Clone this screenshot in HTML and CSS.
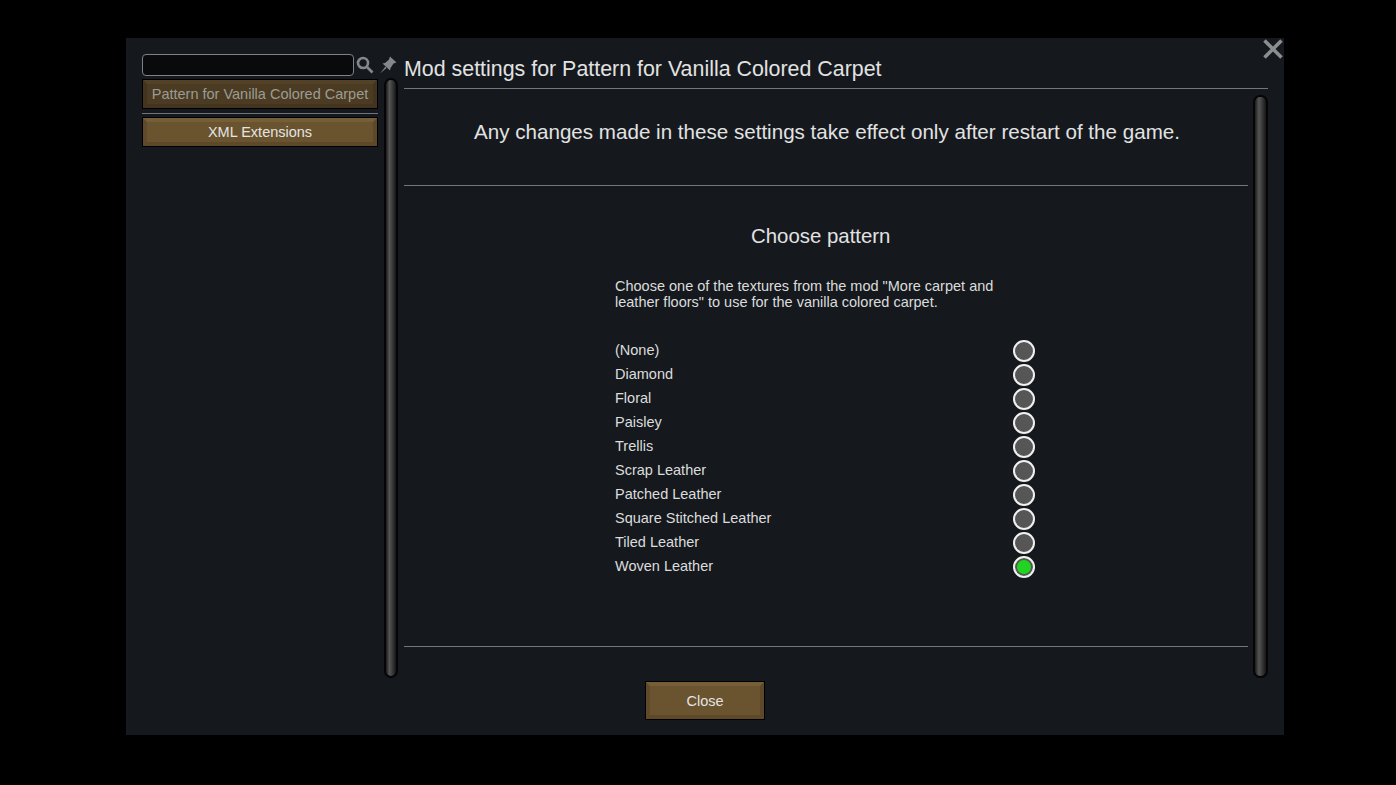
FILE: index.html
```html
<!DOCTYPE html>
<html lang="en">
<head>
<meta charset="utf-8">
<title>Mod settings</title>
<link rel="stylesheet" href="styles.css">
</head>
<body>
<div class="window">
  <svg class="close-x" viewBox="0 0 20 20" width="20" height="20"><path d="M1.5 1.5 18.5 18.5M18.5 1.5 1.5 18.5"/></svg>
  <div class="columns">
    <aside class="sidebar">
      <div class="search-row">
        <div class="search-box"></div>
        <svg class="icon-search" viewBox="0 0 18 18" width="18" height="18"><circle cx="7" cy="7" r="5"/><path d="M11 11 16.5 16.5"/></svg>
        <svg class="icon-pin" viewBox="0 0 18 18" width="18" height="18"><path d="M11 0.5 17.5 6.5 14.5 7.5 11.5 12 11 14.5 3.5 7.5 6 7 10 3.5Z"/><path d="M6.5 10.5 1 17.5 7.5 12Z"/></svg>
      </div>
      <div class="side-body">
        <div class="mod-list">
          <div class="btn mod-btn dim">Pattern for Vanilla Colored Carpet</div>
          <div class="mod-sep"></div>
          <div class="btn mod-btn">XML Extensions</div>
        </div>
        <div class="scrollbar"></div>
      </div>
    </aside>
    <main class="main">
      <h1 class="title">Mod settings for Pattern for Vanilla Colored Carpet</h1>
      <div class="main-body">
        <div class="content">
          <p class="notice">Any changes made in these settings take effect only after restart of the game.</p>
          <section class="pattern">
            <h2 class="pattern-title">Choose pattern</h2>
            <p class="desc">Choose one of the textures from the mod "More carpet and leather floors" to use for the vanilla colored carpet.</p>
            <ul class="options">
              <li class="option"><span>(None)</span><i class="radio"></i></li>
              <li class="option"><span>Diamond</span><i class="radio"></i></li>
              <li class="option"><span>Floral</span><i class="radio"></i></li>
              <li class="option"><span>Paisley</span><i class="radio"></i></li>
              <li class="option"><span>Trellis</span><i class="radio"></i></li>
              <li class="option"><span>Scrap Leather</span><i class="radio"></i></li>
              <li class="option"><span>Patched Leather</span><i class="radio"></i></li>
              <li class="option"><span>Square Stitched Leather</span><i class="radio"></i></li>
              <li class="option"><span>Tiled Leather</span><i class="radio"></i></li>
              <li class="option"><span>Woven Leather</span><i class="radio on"></i></li>
            </ul>
          </section>
        </div>
        <div class="scrollbar"></div>
      </div>
    </main>
  </div>
  <footer class="footer"><div class="btn close-btn">Close</div></footer>
</div>
</body>
</html>
```
FILE: styles.css
```css
* { box-sizing: border-box; }
html, body { margin: 0; height: 100%; background: #000; overflow: hidden; }
body { font-family: "Liberation Sans", Arial, sans-serif; color: #dcdcdc; padding: 38px 0 0 126px; }

.window { position: relative; width: 1158px; height: 697px; background: #15191e; padding: 16px 16px 0; }
.close-x { position: absolute; top: 1px; right: 1px; fill: none; stroke: #8b8d8f; stroke-width: 3.6; }

.columns { display: flex; height: 624px; }

.sidebar { width: 256px; display: flex; flex-direction: column; flex: none; }
.search-row { display: flex; align-items: center; height: 22px; margin-bottom: 2px; }
.search-box { width: 212px; height: 22px; background: #090a0c; border: 1px solid #7f8183; border-radius: 4px; flex: none; }
.icon-search { margin-left: 2px; fill: none; stroke: #85878a; stroke-width: 2.6; flex: none; }
.icon-pin { margin-left: 5px; fill: #85878a; flex: none; }

.side-body { flex: 1; display: flex; min-height: 0; }
.mod-list { width: 236px; flex: none; padding-top: 1px; }
.mod-sep { height: 1px; background: #70737a; margin: 4px 0 3px; }

.btn {
  display: flex; align-items: center; justify-content: center;
  background: #6a532f;
  border: 5px solid;
  border-color: #755f38 #5d4929 #5d4929 #5f4b2b;
  outline: 1px solid #000; outline-offset: -1px;
  color: #e4e4e2; font-size: 14.5px;
}
.mod-btn { height: 30px; }
.mod-btn.dim { height: 30px; background: #4b3b22; border-color: #534227 #433420 #433420 #433420; color: #9b9b96; }

.scrollbar {
  width: 14px; flex: none; margin-left: 6px; border-radius: 7px;
  border: 2px solid #050506;
  background: linear-gradient(90deg, #1c1c1c 0%, #555 35%, #3e3e3e 60%, #161616 100%);
}

.main { flex: 1; min-width: 0; margin-left: 6px; display: flex; flex-direction: column; }
.title { margin: 0; height: 35px; padding-top: 3px; font-size: 21.4px; line-height: 24px; font-weight: 400; color: #e2e2e2; border-bottom: 1px solid #73767a; flex: none; }
.main-body { flex: 1; min-height: 0; display: flex; padding-top: 6px; }
.main-body .scrollbar { width: 15px; margin-left: 5px; }

.content { width: 844px; flex: none; border-bottom: 1px solid #73767a; height: 552px; }
.notice { margin: 0; height: 91px; padding: 25px 0 0; box-sizing: border-box; text-align: center; font-size: 20.6px; line-height: 24px; color: #e2e2e2; border-bottom: 1px solid #73767a; padding-left: 2px; }

.pattern { width: 420px; margin-left: 211px; }
.pattern-title { margin: 0; padding: 38px 0 0; text-align: left; font-size: 20.4px; line-height: 24px; font-weight: 400; color: #e2e2e2; text-indent: 136px; white-space: nowrap; }
.desc { margin: 30px 0 0; width: 385px; font-size: 14.5px; line-height: 16px; color: #dcdcdc; }

.options { list-style: none; margin: 29px 0 0; padding: 0; }
.option { display: flex; justify-content: space-between; align-items: center; height: 24px; font-size: 14.5px; color: #dcdcdc; }
.option span { position: relative; top: -1px; }

.radio { display: block; width: 22px; height: 22px; border-radius: 50%; background: #565656; border: 2px solid #f0f0f0; }
.radio.on { background: #22d422; box-shadow: inset 0 0 0 2px #565656; }

.footer { display: flex; justify-content: center; margin-top: 3px; }
.close-btn { width: 120px; height: 39px; }
```
